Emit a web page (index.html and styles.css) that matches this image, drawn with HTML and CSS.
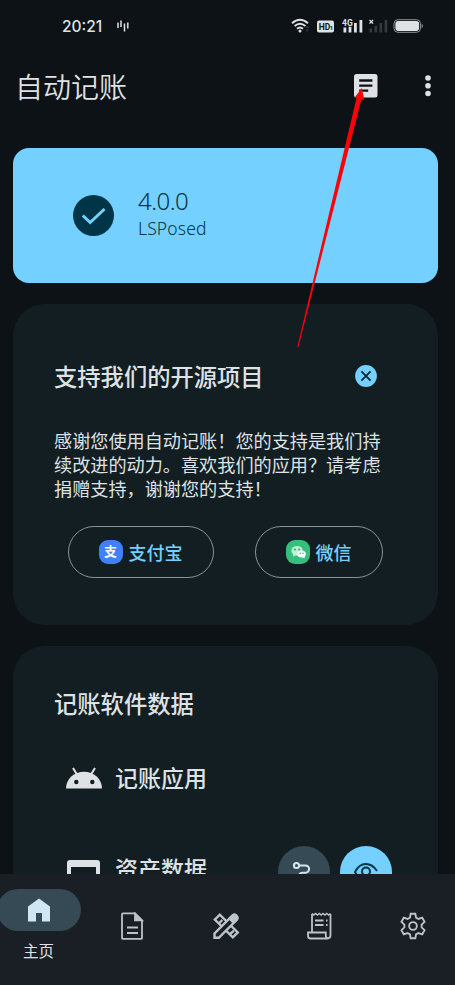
FILE: index.html
```html
<!DOCTYPE html>
<html lang="zh-CN">
<head>
<meta charset="utf-8">
<title>自动记账</title>
<link rel="stylesheet" href="styles.css">
</head>
<body>
<div class="phone">
  <header class="status">
    <span class="clock">20:21</span>
    <svg class="voice" width="12" height="14" viewBox="0 0 12 14" stroke="#dfe2e4" stroke-width="1.500"><path d="M1 3.500v5.500M4 1.500v6.500M7.500 4.500v8M10.800 3.500v6"/></svg>
    <svg class="signals" width="134" height="18" viewBox="0 0 134 18">
      <g fill="none" stroke="#dfe2e4" stroke-width="1.9"><path d="M1 6.200q8-7 16 0M3.600 9q5.400-4.600 10.800 0M6 11.700q3-2.500 6 0"/></g>
      <circle cx="9" cy="14" r="1.500" fill="#dfe2e4"/>
      <path d="m14.500 11 1.800-2.200 1.800 2.200zM14.500 12.500l1.800 2.200 1.800-2.200z" fill="#343a3e"/>
      <rect x="26" y="3.500" width="17" height="12" rx="2" fill="#dfe2e4"/>
      <text class="hd" x="27.700" y="12.800">HD</text><text class="hd-num" x="38.800" y="12.800">1</text>
      <path d="M52.500 10.500h2.800v5h-2.800zM57.600 9.500h2.800v6h-2.800zM63 6h2.800v9.500h-2.800zM68.500 3h2.800v12.500h-2.800z" fill="#dfe2e4"/>
      <text class="net" x="51" y="8.500">4G</text>
      <path d="m78.500 3 3.600 3.600m0-3.600-3.600 3.600" stroke="#dfe2e4" stroke-width="1.300"/>
      <path d="M78.500 11.500h2.600v4h-2.600zM83.500 9h2.600v6.500h-2.600zM88.500 6h2.600v9.500h-2.600zM93.600 3h2.600v12.500h-2.600z" fill="#343a3e"/>
      <rect x="103" y="2.700" width="26.500" height="12.600" rx="4" fill="none" stroke="#8e9397"/>
      <rect x="104.400" y="4.100" width="23.700" height="9.800" rx="2.800" fill="#dfe2e4"/>
      <path d="M130.700 6.600q2.600 2.400 0 4.800z" fill="#8e9397"/>
    </svg>
  </header>
  <div class="topbar">
    <h1>自动记账</h1>
    <svg class="log" width="24" height="24" viewBox="0 0 24 24"><rect width="23.500" height="23.500" rx="2.500" fill="#dfe2e4"/><path d="M5.200 6.500h13.200M5.200 11.600h13.200M5.200 16.600h9" stroke="#0d1216" stroke-width="2.400"/></svg>
    <svg class="more" width="6" height="22" viewBox="0 0 6 22" fill="#dfe2e4"><circle cx="3" cy="3" r="2.800"/><circle cx="3" cy="10.800" r="2.800"/><circle cx="3" cy="18.500" r="2.800"/></svg>
  </div>
  <main class="content">
    <section class="card active">
      <svg width="42" height="42" viewBox="0 0 42 42"><circle cx="20.500" cy="20.500" r="20.500" fill="#003548"/><path d="m9.800 20.500 7.400 7L31.500 14" fill="none" stroke="#74d1ff" stroke-width="3"/></svg>
      <div class="version"><span class="num">4.0.0</span><span class="framework">LSPosed</span></div>
    </section>
    <section class="card support">
      <div class="heading">
        <h2>支持我们的开源项目</h2>
        <svg width="22" height="22" viewBox="0 0 22 22"><circle cx="11" cy="11" r="10.900" fill="#74d1ff"/><path d="m6.400 6.400 9.200 9.200m0-9.200-9.200 9.200" stroke="#102532" stroke-width="1.800"/></svg>
      </div>
      <p>感谢您使用自动记账！您的支持是我们持<br>续改进的动力。喜欢我们的应用？请考虑<br>捐赠支持，谢谢您的支持！</p>
      <div class="donate">
        <div class="pill alipay">
          <span class="alipay-mark">支</span>
          <span>支付宝</span>
        </div>
        <div class="pill wechat">
          <svg width="24" height="24" viewBox="0 0 24 24"><rect width="24" height="24" rx="9" fill="#36be7c"/><ellipse cx="11" cy="10.800" rx="5.600" ry="4.900" fill="#b9f5d2"/><path d="m7.300 13.500-.3 3 3-1.300z" fill="#b9f5d2"/><ellipse cx="15.600" cy="14" rx="4.200" ry="3.600" fill="#fff"/><path d="m18.500 16 .2 2.200-2.500-1z" fill="#fff"/><g fill="#269b62"><circle cx="9" cy="9.500" r=".9"/><circle cx="13" cy="9.500" r=".9"/><circle cx="14.200" cy="13.200" r=".7"/><circle cx="17" cy="13.200" r=".7"/></g></svg>
          <span>微信</span>
        </div>
      </div>
    </section>
    <section class="card data">
      <h2>记账软件数据</h2>
      <div class="row">
        <svg width="38" height="22" viewBox="0 0 38 22"><path d="M1 21.500a18 16.800 0 0 1 36 0z" fill="#dfe2e4"/><path d="m8 1 4.300 7M30 1l-4.300 7" stroke="#dfe2e4" stroke-width="2"/><circle cx="11.300" cy="15" r="2.200" fill="#131e23"/><circle cx="27.300" cy="15" r="2.200" fill="#131e23"/></svg>
        <span>记账应用</span>
      </div>
      <div class="row assets">
        <svg class="wallet" width="38" height="30" viewBox="0 0 38 30"><path fill-rule="evenodd" d="M5 0h27q3 0 3 3v24q0 3-3 3H5q-3 0-3-3V3q0-3 3-3zm1 7v18h25V7z" fill="#dfe2e4"/></svg>
        <span>资产数据</span>
        <svg class="route" width="52" height="52" viewBox="0 0 52 52"><circle cx="26" cy="26" r="26" fill="#354a54"/><g fill="none" stroke="#d2e5f2" stroke-width="2"><circle cx="18.500" cy="19.500" r="2.600"/><path d="M21.200 19.500h6.300a3.600 3.600 0 0 1 0 7.200h-3a3.600 3.600 0 0 0 0 7.200H31"/><circle cx="33.500" cy="34" r="2.600"/></g></svg>
        <svg class="view" width="52" height="52" viewBox="0 0 52 52"><circle cx="26" cy="26" r="26" fill="#74d1ff"/><g fill="none" stroke="#003548" stroke-width="2"><path d="M37 25q-4.500-7-11.200-7T15 26q4.200 8 11 8"/><circle cx="26" cy="25.500" r="4"/></g></svg>
      </div>
    </section>
  </main>
  <nav class="tabs">
    <div class="tab home">
      <span class="indicator"><svg width="22" height="24" viewBox="0 0 22 24"><path d="M0 8.500 11 .5l11 8v15h-8V15H8v8.500H0z" fill="#d0e6f5"/></svg></span>
      <span class="label">主页</span>
    </div>
    <div class="tab"><svg width="28" height="28" viewBox="0 0 28 28" fill="none" stroke="#bcc3ca" stroke-width="1.800"><path d="M5 1.400h12l7 7v17.500q0 1-1 1H5q-1 0-1-1V2.400q0-1 1-1zM9 15.500h11M9 21h11"/><path d="M17 1.500v6.900h7z" fill="#bcc3ca"/></svg></div>
    <div class="tab"><svg width="28" height="28" viewBox="0 0 28 28" fill="none" stroke="#bcc3ca" stroke-width="2.400"><path d="m2.800 7.600 5-5 18 17.800-5 5zM6.800 11.500l2-2M10.300 8l-2 2M18 22.200l2-2M21.800 18.600l-2 2"/><path d="M2.500 25.800v-4.300L20.500 3.500l4.300 4.300L6.800 25.800z" fill="#1a1e25"/><path d="m17.500 6.500 4-3.800q1.500-.5 3 1t1 3l-4 3.800z" fill="#bcc3ca"/></svg></div>
    <div class="tab"><svg width="28" height="28" viewBox="0 0 28 28" fill="none" stroke="#bcc3ca" stroke-width="1.800"><path d="M7 20.500V2M25.500 2v21.300q0 3.200-3.200 3.200H5.500q-2.500 0-2.500-3v-3h17.800v3q0 3 2.300 3M10 8.500h8.500M10 13h8.500M21 8.500h1.500M21 13h1.500"/><path d="m7 1.500 1.800 1.600L10.700 1.500l1.800 1.600 1.900-1.600 1.800 1.600 1.900-1.600 1.800 1.600 1.900-1.600 1.800 1.600 1.900-1.600" stroke-width="1.500"/></svg></div>
    <div class="tab"><svg width="28" height="28" viewBox="0 0 24 24" fill="none" stroke="#bcc3ca" stroke-width="1.600"><path d="M10 1.500h4l.6 3.300 2 1.150 3.300-1.050 2 3.500-2.500 2.400v2.400l2.500 2.400-2 3.500-3.300-1.050-2 1.150L14 22.500h-4l-.6-3.300-2-1.150-3.300 1.050-2-3.500 2.500-2.400v-2.400L2.100 8.400l2-3.500 3.300 1.050 2-1.150z"/><circle cx="12" cy="12" r="3.300"/></svg></div>
  </nav>
  <svg class="pointer" width="72" height="262" viewBox="0 0 72 262"><path d="M.3 261 59.500 12.300 57.500 11.700 64.800 2 67.300 14 64.400 13.300 1.400 261z" fill="#fe0008"/></svg>
</div>
</body>
</html>
```
FILE: styles.css
```css
* { box-sizing: border-box; }
body { margin: 0; background: #0d1216; }
svg { display: block; flex: none; }
h1, h2, p { margin: 0; font-weight: 400; }
.phone {
  position: relative;
  display: flex;
  flex-direction: column;
  width: 455px;
  height: 985px;
  overflow: hidden;
  color: #dfe2e4;
  font-family: Roboto, "Noto Sans CJK SC", sans-serif;
  white-space: nowrap;
}
.status { display: flex; align-items: center; height: 52px; padding: 0 30px 0 62px; }
.clock { width: 55px; padding-top: 1px; font: 500 15.500px/20px Inter, sans-serif; }
.signals { margin-left: auto; }
.hd { font: 700 8.500px Roboto, sans-serif; fill: #0d1216; }
.hd-num { font: 700 6px Roboto, sans-serif; fill: #0d1216; }
.net { font: 700 8.500px Roboto, sans-serif; fill: #dfe2e4; stroke: #0d1216; stroke-width: 1.200px; paint-order: stroke; }
.topbar { display: flex; align-items: center; height: 68px; padding: 0 24px 0 15px; }
h1 { padding-top: 5px; font-size: 28px; line-height: 40px; font-weight: 350; }
.log { margin-left: auto; }
.more { margin-left: 47px; }
.content { flex: 1; min-height: 0; padding: 28px 17px 0 13px; overflow: hidden; display: flex; flex-direction: column; gap: 21px; }
.card { flex: none; background: #131e23; border-radius: 32px; }
.active { display: flex; align-items: center; gap: 23px; height: 135px; padding-left: 60px; border-radius: 16px; background: #74d1ff; color: #003548; }
.version { display: flex; flex-direction: column; margin-top: -3px; }
.num { font: 300 24px/28px "Noto Sans", sans-serif; letter-spacing: -.5px; }
.framework { font: 300 17.500px/26px "Noto Sans", sans-serif; letter-spacing: .15px; }
.support { height: 321px; padding: 56px 55px 0 41px; }
.heading { display: flex; align-items: center; justify-content: space-between; height: 34px; padding-right: 6px; }
.heading h2 { padding-top: 2px; }
.heading svg { margin-top: -2px; }
h2 { font-size: 23.300px; line-height: 34px; font-weight: 500; }
.support p { margin-top: 36px; font-size: 18.150px; line-height: 24px; }
.donate { display: flex; gap: 41px; margin: 24px 0 0 14px; }
.pill { display: flex; align-items: center; justify-content: center; gap: 6px; height: 52px; padding-right: 1px; border: 1px solid #879299; border-radius: 26px; color: #74d1ff; font-size: 18px; font-weight: 500; }
.alipay { width: 146px; }
.wechat { width: 128px; }
.alipay-mark { width: 24px; height: 24px; border-radius: 9px; background: #3f80fb; color: #fff; font-size: 13px; line-height: 23px; font-weight: 700; text-align: center; }
.data { height: 340px; padding: 42px 46px 0 41px; }
.row { display: flex; align-items: center; height: 52px; margin-top: 30px; padding-left: 11px; font-size: 23px; font-weight: 500; }
.row span { margin: -3px 0 0 12px; }
.assets { margin-top: 42px; }
.assets span { margin-top: -9px; }
.wallet { margin-top: 6px; }
.route { margin-left: auto; }
.view { margin-left: 10px; }
.tabs { display: flex; flex: none; height: 111px; background: #1a1e25; padding-top: 15px; }
.tab { display: flex; justify-content: center; width: 93.500px; flex: none; padding-top: 23px; }
.home { flex-direction: column; justify-content: flex-start; align-items: center; width: 81px; margin-right: 4.500px; padding-top: 0; }
.home .label { margin-top: 9px; margin-left: -4px; font-size: 15.500px; line-height: 24px; }
.indicator { display: flex; align-items: center; justify-content: center; width: 84px; height: 42px; margin-left: -4px; border-radius: 21px; background: #354a54; }
.pointer { position: absolute; left: 297px; top: 86px; }
```
